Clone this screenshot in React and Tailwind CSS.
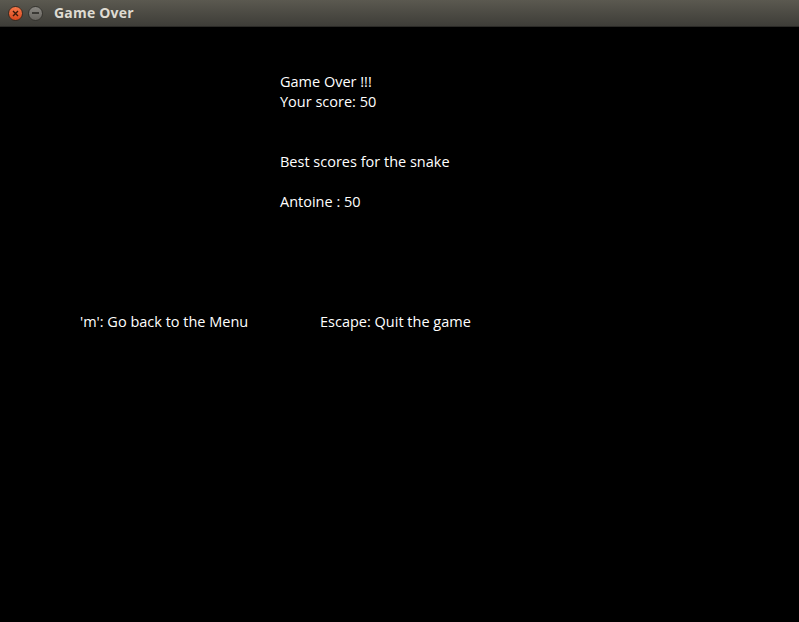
export default function App() {
  const font = { fontFamily: '"Open Sans", "Noto Sans", sans-serif' };
  return (
    <div className="w-[799px] h-[622px] bg-black flex flex-col overflow-hidden" style={font}>
      <div className="h-[27px] shrink-0 flex items-center bg-gradient-to-b from-[#5b5950] to-[#3e3d38] border-b border-[#2b2a27]">
        <div className="ml-[8px] w-[15px] h-[15px] rounded-full bg-gradient-to-b from-[#f5784a] to-[#d9461a] border border-[#3a2a20] flex items-center justify-center">
          <svg width="7" height="7" viewBox="0 0 7 7"><path d="M1 1L6 6M6 1L1 6" stroke="#3a1a0a" strokeWidth="1.4" /></svg>
        </div>
        <div className="ml-[5px] w-[15px] h-[15px] rounded-full bg-gradient-to-b from-[#8a8883] to-[#65635e] border border-[#35342f] flex items-center justify-center">
          <div className="w-[7px] h-[2px] bg-[#3a3935]" />
        </div>
        <div className="ml-[11px] text-[14px] font-bold text-[#dfdbd2] leading-none tracking-[0.2px]">Game Over</div>
      </div>
      <div className="flex flex-col text-white text-[14.5px] leading-[20px]">
        <div className="pl-[280px] pt-[45px] flex flex-col">
          <div>Game Over !!!</div>
          <div>Your score: 50</div>
          <div className="mt-[40px]">Best scores for the snake</div>
          <div className="mt-[20px]">Antoine : 50</div>
        </div>
        <div className="mt-[100px] flex">
          <div className="ml-[80px] w-[240px]">'m': Go back to the Menu</div>
          <div>Escape: Quit the game</div>
        </div>
      </div>
    </div>
  );
}
